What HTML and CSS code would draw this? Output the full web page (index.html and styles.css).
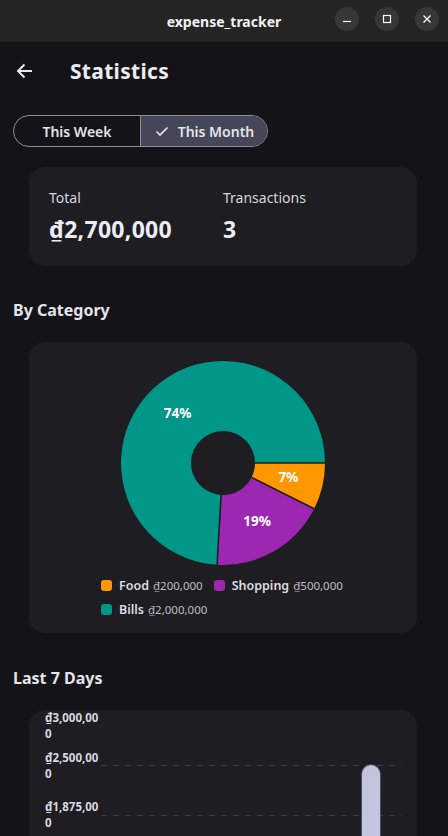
FILE: index.html
```html
<!DOCTYPE html>
<html lang="en">
<head>
    <meta charset="UTF-8">
    <meta name="viewport" content="width=device-width, initial-scale=1.0">
    <title>expense_tracker</title>
    <link rel="stylesheet" href="styles.css">
</head>
<body>
    <!-- Window title bar -->
    <div class="titlebar">
        <div class="titlebar-title">expense_tracker</div>
        <div class="win-buttons">
            <span class="win-btn">
                <svg width="10" height="10" viewBox="0 0 10 10"><path d="M1 7.5h8" stroke="#fff" stroke-width="1.2"/></svg>
            </span>
            <span class="win-btn">
                <svg width="10" height="10" viewBox="0 0 10 10"><rect x="1.5" y="1.5" width="7" height="7" fill="none" stroke="#fff" stroke-width="1.2"/></svg>
            </span>
            <span class="win-btn">
                <svg width="10" height="10" viewBox="0 0 10 10"><path d="M1.5 1.5l7 7M8.5 1.5l-7 7" stroke="#fff" stroke-width="1.3"/></svg>
            </span>
        </div>
    </div>

    <div class="app">
        <!-- Header -->
        <div class="header">
            <svg class="back" width="18" height="18" viewBox="0 0 18 18">
                <path d="M16 9H2.5M8.5 2.5L2 9l6.5 6.5" fill="none" stroke="#e8e8ee" stroke-width="2"/>
            </svg>
            <div class="page-title">Statistics</div>
        </div>

        <!-- Period switch -->
        <div class="segment">
            <div class="seg-item">This Week</div>
            <div class="seg-item selected">
                <svg width="16" height="16" viewBox="0 0 16 16"><path d="M2.5 8.5l3.5 3.5 7.5-7.5" fill="none" stroke="#e6e6ee" stroke-width="1.6"/></svg>
                This Month
            </div>
        </div>

        <!-- Summary -->
        <div class="card summary">
            <div>
                <div class="sum-label">Total</div>
                <div class="sum-value">₫2,700,000</div>
            </div>
            <div>
                <div class="sum-label">Transactions</div>
                <div class="sum-value">3</div>
            </div>
        </div>

        <h2 class="section-title">By Category</h2>
        <div class="card pie-card">
            <svg class="pie" width="206" height="206" viewBox="0 0 206 206">
                <path d="M205 103 A102 102 0 0 1 194.15 148.78 L131.6 117.36 A32 32 0 0 0 135 103 Z" fill="#ff9800"/>
                <path d="M194.15 148.78 A102 102 0 0 1 97.07 204.83 L101.14 134.95 A32 32 0 0 0 131.6 117.36 Z" fill="#9c27b0"/>
                <path d="M97.07 204.83 A102 102 0 1 1 205 103 L135 103 A32 32 0 1 0 101.14 134.95 Z" fill="#009688"/>
                <g stroke="#1d1d22" stroke-width="1.6">
                    <path d="M205 103 L135 103"/>
                    <path d="M194.15 148.78 L131.6 117.36"/>
                    <path d="M97.07 204.83 L101.14 134.95"/>
                </g>
                <text class="pie-label" x="57.5" y="53">74%</text>
                <text class="pie-label" x="168.5" y="117">7%</text>
                <text class="pie-label" x="137" y="161">19%</text>
            </svg>
            <div class="legend">
                <div class="legend-item"><span class="swatch food"></span>Food <span class="amount">₫200,000</span></div>
                <div class="legend-item"><span class="swatch shopping"></span>Shopping <span class="amount">₫500,000</span></div>
                <div class="legend-item"><span class="swatch bills"></span>Bills <span class="amount">₫2,000,000</span></div>
            </div>
        </div>

        <h2 class="section-title last-days">Last 7 Days</h2>
        <div class="card chart-card">
            <div class="y-label" style="top: 0px">₫3,000,000</div>
            <div class="y-label" style="top: 40px">₫2,500,000</div>
            <div class="y-label" style="top: 89px">₫1,875,000</div>
            <div class="grid-line" style="top: 55px"></div>
            <div class="grid-line" style="top: 105px"></div>
            <div class="grid-line" style="top: 155px"></div>
            <div class="bar" style="top: 55px"></div>
        </div>
    </div>
</body>
</html>
```

FILE: styles.css
```css
/* Base */
body {
    margin: 0;
    background-color: #131318;
    font-family: "Noto Sans", sans-serif;
    color: #e4e4ea;
    overflow: hidden;
}

/* Window title bar */
.titlebar {
    height: 42px;
    background-color: #242424;
    display: flex;
    align-items: center;
    justify-content: center;
    position: relative;
}

.titlebar-title {
    font-size: 14px;
    font-weight: bold;
    color: #f2f2f2;
}

.win-buttons {
    position: absolute;
    right: 9px;
    top: 7px;
    display: flex;
    gap: 16px;
}

.win-btn {
    width: 24px;
    height: 24px;
    border-radius: 50%;
    background-color: #373737;
    display: flex;
    align-items: center;
    justify-content: center;
}

/* Main content */
.app {
    padding: 0 13px;
}

.header {
    height: 58px;
    display: flex;
    align-items: center;
}

.back {
    margin-left: 3px;
}

.page-title {
    margin-left: 36px;
    font-size: 21px;
    font-weight: bold;
    letter-spacing: 0.3px;
    color: #ececf2;
}

/* Segmented button */
.segment {
    margin-top: 15px;
    display: flex;
    width: 255px;
    height: 32px;
    border: 1px solid #8d8f99;
    border-radius: 17px;
    overflow: hidden;
    box-sizing: border-box;
}

.seg-item {
    flex: 1;
    display: flex;
    align-items: center;
    justify-content: center;
    gap: 8px;
    font-size: 14px;
    font-weight: 600;
    color: #e4e4ea;
}

.seg-item.selected {
    background-color: #454759;
    border-left: 1px solid #8d8f99;
}

/* Cards */
.card {
    background-color: #1d1d22;
    border-radius: 16px;
    margin: 0 18px 0 16px;
}

.summary {
    margin-top: 20px;
    padding: 21px 20px 22px;
    display: grid;
    grid-template-columns: 1fr 1fr;
}

.sum-label {
    font-size: 14px;
    line-height: 20px;
    color: #d6d6de;
}

.sum-value {
    margin-top: 6px;
    font-size: 23px;
    line-height: 30px;
    font-weight: bold;
    letter-spacing: 0.3px;
    color: #ececf2;
}

.section-title {
    margin: 33px 0 21px;
    font-size: 16px;
    line-height: 22px;
    font-weight: bold;
    color: #e4e4ea;
}

.section-title.last-days {
    margin-top: 34px;
}

/* Pie chart */
.pie-card {
    padding: 18px 16px 12px;
    display: flex;
    flex-direction: column;
    align-items: center;
}

.pie-label {
    font-size: 13.5px;
    font-weight: bold;
    fill: #ffffff;
    text-anchor: middle;
    dominant-baseline: central;
}

.legend {
    margin-top: 7px;
    width: 244px;
    display: flex;
    flex-wrap: wrap;
    column-gap: 11px;
}

.legend-item {
    display: flex;
    align-items: center;
    height: 24px;
    font-size: 12.5px;
    font-weight: 600;
    color: #dcdce4;
}

.swatch {
    width: 11px;
    height: 11px;
    border-radius: 3px;
    margin-right: 7px;
}

.swatch.food { background-color: #ff9800; }
.swatch.shopping { background-color: #9c27b0; }
.swatch.bills { background-color: #009688; }

.amount {
    margin-left: 4px;
    font-size: 11.5px;
    font-weight: normal;
    color: #bdbec6;
}

/* Bar chart */
.chart-card {
    position: relative;
    height: 300px;
}

.y-label {
    position: absolute;
    left: 16px;
    width: 58px;
    font-size: 11.5px;
    line-height: 16px;
    font-weight: bold;
    color: #d8d8e0;
    word-break: break-all;
}

.grid-line {
    position: absolute;
    left: 72px;
    width: 301px;
    height: 1px;
    background: repeating-linear-gradient(90deg, #3a4147 0 6px, transparent 6px 12px);
}

.bar {
    position: absolute;
    left: 333px;
    width: 18px;
    bottom: 0;
    border-radius: 9px 9px 0 0;
    background: linear-gradient(180deg, #c3c3dc, #c6cbec);
    box-shadow: 0 0 0 1px #4a4d63;
}
```
